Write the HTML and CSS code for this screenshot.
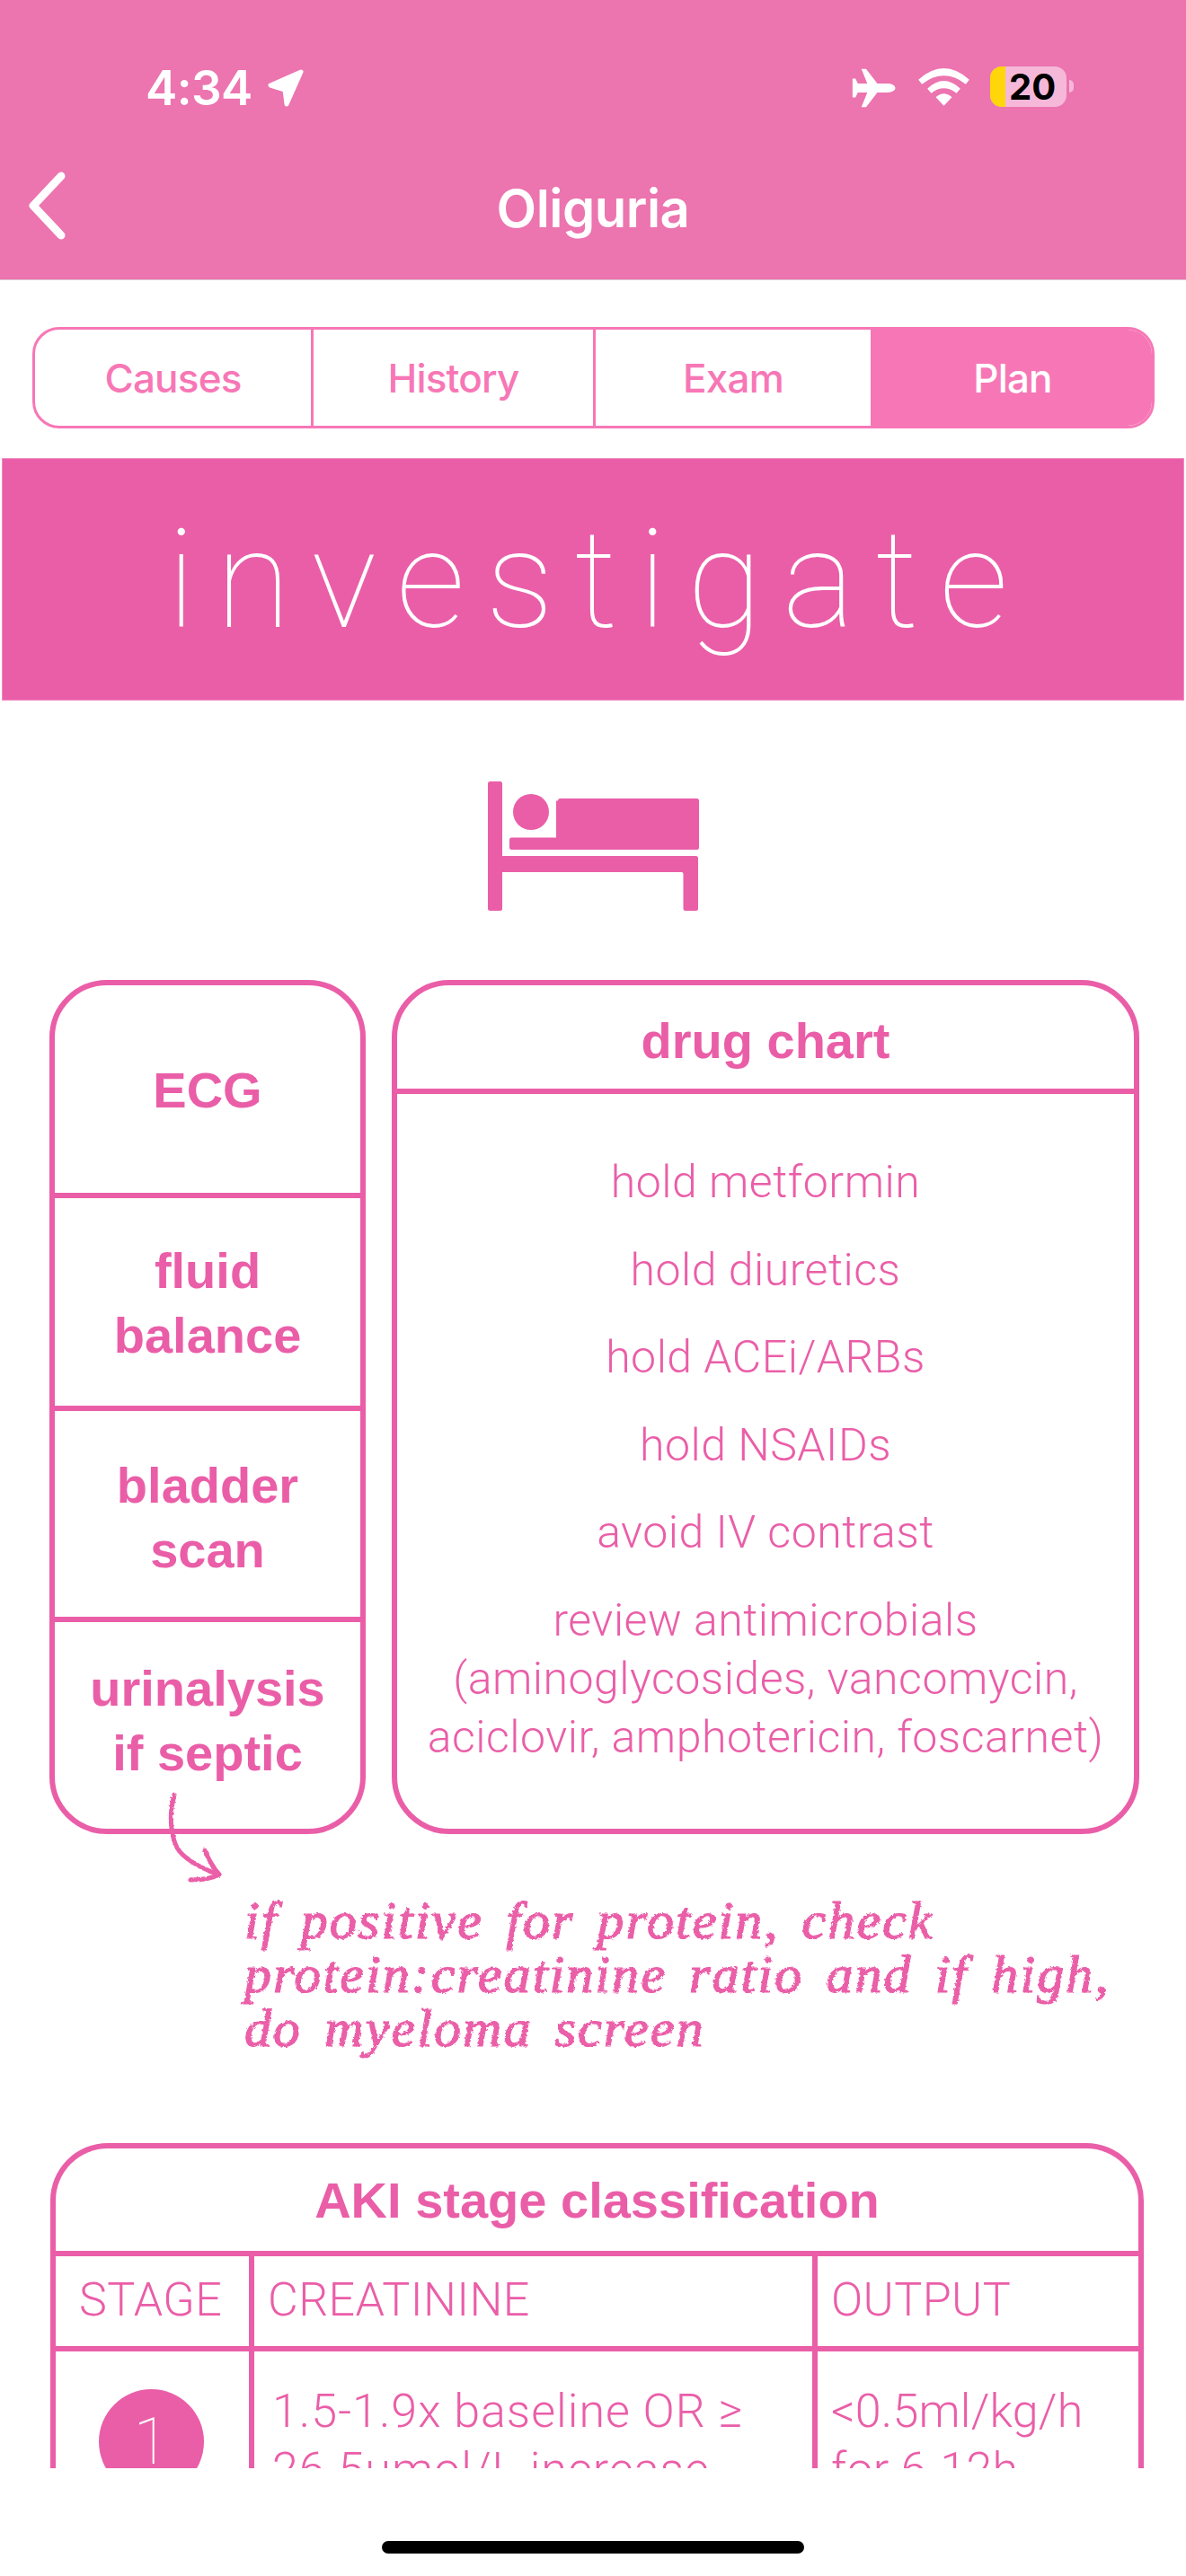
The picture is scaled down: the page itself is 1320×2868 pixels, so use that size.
FILE: index.html
```html
<!DOCTYPE html>
<html lang="en">
<head>
<meta charset="utf-8">
<title>Oliguria</title>
<link rel="stylesheet" href="styles.css">
</head>
<body>
<svg class="defs" width="0" height="0" aria-hidden="true">
  <filter id="rough" x="-5%" y="-5%" width="110%" height="110%">
    <feTurbulence type="fractalNoise" baseFrequency="0.35" numOctaves="2" seed="4" result="n"/>
    <feDisplacementMap in="SourceGraphic" in2="n" scale="3.5"/>
  </filter>
</svg>
<div class="phone">
  <header class="top">
    <div class="status">
      <span class="time">4:34</span>
      <svg class="loc" viewBox="0 0 42 42"><path d="M38 3 L4 18 L20 23 L22 39 Z" fill="#fff" stroke="#fff" stroke-width="5" stroke-linejoin="round"/></svg>
      <div class="status-right">
        <svg class="plane" viewBox="140 78 148 134"><path d="M287 145C287 137 275 130 262 130L226 130L188 80L172 80L192 130L160 130L152 113L142 113L142 177L152 177L160 160L192 160L172 210L188 210L226 160L262 160C275 160 287 153 287 145Z" fill="#fff"/></svg>
        <svg class="wifi" viewBox="360 75 170 126"><path d="M360 113Q445 37 530 113L518 128Q445 72 372 128ZM390 143Q445 91 500 143L487 158Q445 126 403 158ZM418 172Q445 148 472 172L445 200Z" fill="#fff"/></svg>
        <div class="battery"><span class="battery-fill"></span><span class="battery-num">20</span></div>
        <span class="battery-cap"></span>
      </div>
    </div>
    <div class="nav">
      <svg class="back" viewBox="0 0 44 76"><path d="M38 5 L7 38 L38 71" fill="none" stroke="#fff" stroke-width="9" stroke-linecap="round" stroke-linejoin="round"/></svg>
      <h1 class="title">Oliguria</h1>
    </div>
  </header>

  <main class="content">
    <nav class="tabs">
      <span class="tab">Causes</span>
      <span class="tab">History</span>
      <span class="tab">Exam</span>
      <span class="tab tab-on">Plan</span>
    </nav>

    <div class="banner">investigate</div>

    <svg class="bed" viewBox="0 0 236 144">
      <rect x="0" y="0" width="16" height="144" rx="2.5"/>
      <circle cx="48" cy="34" r="20"/>
      <path d="M78 21.5a2.500 2.500 0 0 1 2.500-2.500H232.500a2.500 2.500 0 0 1 2.500 2.500V73.500a2.500 2.500 0 0 1-2.500 2.500H26.500a2.500 2.500 0 0 1-2.500-2.500V65a2.500 2.500 0 0 1 2.500-2.500H76V21.500Z"/>
      <path d="M16 83H231.500a2.500 2.500 0 0 1 2.500 2.500V141.500a2.500 2.500 0 0 1-2.500 2.500H220a2.500 2.500 0 0 1-2.500-2.500V103a2 2 0 0 0-2-2H16Z"/>
    </svg>

    <section class="pair">
      <div class="card stack">
        <div class="stack-row">ECG</div>
        <div class="stack-row">fluid<br>balance</div>
        <div class="stack-row">bladder<br>scan</div>
        <div class="stack-row">urinalysis<br>if septic</div>
      </div>
      <div class="card chart">
        <h2 class="chart-head">drug chart</h2>
        <ul class="chart-list">
          <li>hold metformin</li>
          <li>hold diuretics</li>
          <li>hold ACEi/ARBs</li>
          <li>hold NSAIDs</li>
          <li>avoid IV contrast</li>
          <li>review antimicrobials<br>(aminoglycosides, vancomycin,<br>aciclovir, amphotericin, foscarnet)</li>
        </ul>
      </div>
      <svg class="note-arrow" viewBox="0 0 75 105"><path d="M17 3C10 28 14 50 20 62C28 76 50 86 66 92M51 65C55 75 60 84 67 92C58 97 46 98 35 98" fill="none" stroke="#ea5ea8" stroke-width="5" stroke-linecap="round" stroke-linejoin="round"/></svg>
    </section>

    <p class="note">if positive for protein, check<br>protein:creatinine ratio and if high,<br>do myeloma screen</p>

    <section class="card aki">
      <h2 class="aki-head">AKI stage classification</h2>
      <div class="aki-row aki-labels">
        <div class="aki-cell aki-stage">STAGE</div>
        <div class="aki-cell">CREATININE</div>
        <div class="aki-cell">OUTPUT</div>
      </div>
      <div class="aki-row">
        <div class="aki-cell aki-stage"><span class="stage-dot">1</span></div>
        <div class="aki-cell aki-val">1.5-1.9x baseline OR ≥<br>26.5µmol/L increase</div>
        <div class="aki-cell aki-val aki-out">&lt;0.5ml/kg/h<br>for 6-12h</div>
      </div>
    </section>
  </main>

  <footer class="home"><span class="home-bar"></span></footer>
</div>
</body>
</html>
```
FILE: styles.css
```css
* { box-sizing: border-box; }
html, body { margin: 0; padding: 0; background: #fff; }
.defs { position: absolute; }
.phone { width: 1320px; height: 2868px; display: flex; flex-direction: column; overflow: hidden; color: #ea5ea8; font-family: "Roboto", "Liberation Sans", sans-serif; }

.top { height: 312px; flex: none; background: #ec74af; border-bottom: 1px solid #d9c7d0; color: #fff; }
.status { display: flex; align-items: flex-start; height: 176px; padding: 75px 125px 0 162px; }
.time { font: 600 53px/46px "Inter", sans-serif; letter-spacing: -0.6px; }
.loc { width: 42px; height: 42px; margin: 2px 0 0 16px; }
.status-right { display: flex; align-items: flex-start; margin-left: auto; }
.plane { width: 49px; height: 44px; margin-top: 1px; }
.wifi { width: 57px; height: 42px; margin: 1px 0 0 25px; }
.battery { position: relative; width: 85px; height: 45px; margin: -1px 0 0 23px; border-radius: 13px; background: #f6b8d8; overflow: hidden; }
.battery-fill { display: block; width: 17px; height: 100%; background: #ffd60a; }
.battery-num { position: absolute; left: 21px; top: 0; font: 700 40px/45px "Inter", sans-serif; color: #000; }
.battery-cap { width: 5px; height: 14px; margin: 14px 0 0 3px; background: #f6b8d8; border-radius: 0 7px 7px 0; }

.nav { display: grid; grid-template-columns: 1fr auto 1fr; align-items: center; height: 135px; padding-bottom: 24px; }
.back { width: 44px; height: 76px; margin: -6px 0 0 30px; }
.title { margin: 0; font: 600 58px/64px "Inter", sans-serif; letter-spacing: -0.5px; }

.content { flex: 1; min-height: 0; overflow: hidden; padding-top: 52px; }

.tabs { display: grid; grid-template-columns: 310px 314px 309px 1fr; width: 1249px; height: 113px; margin-left: 36px; border: 3px solid #f777b6; border-radius: 30px; overflow: hidden; }
.tab { display: flex; align-items: center; justify-content: center; color: #f777b6; font: 500 44px/1 "Inter", sans-serif; letter-spacing: -0.8px; border-right: 3px solid #f777b6; }
.tab-on { background: #f777b6; color: #fff; border-right: 0; }

.banner { height: 270px; margin: 33px 2px 0; padding: 4px 0 0 11px; background: #ea5ea8; border: 1px solid #f08cc0; color: #fff; text-align: center; font: 100 152px/262px "Roboto", sans-serif; letter-spacing: 23px; }

.bed { display: block; width: 236px; height: 144px; margin: 90px 0 0 543px; fill: #ea5ea8; }

.pair { position: relative; display: grid; grid-template-columns: 352px 832px; gap: 29px; height: 951px; margin: 77px 0 0 55px; }
.card { border: 6px solid #ea5ea8; border-radius: 64px; }
.stack { display: grid; grid-template-rows: 237px 237px 235px 1fr; }
.stack-row { display: flex; align-items: center; justify-content: center; text-align: center; border-bottom: 6px solid #ea5ea8; font: 700 56px/72px "Liberation Sans", sans-serif; padding-top: 3px; }
.stack-row:nth-child(3) { padding-top: 8px; }
.stack-row:last-child { border-bottom: 0; padding: 0 0 10px; }
.chart { display: flex; flex-direction: column; }
.chart-head { margin: 0; height: 121px; border-bottom: 6px solid #ea5ea8; text-align: center; font: 700 56px/124px "Liberation Sans", sans-serif; }
.chart-list { margin: 0; padding: 66px 0 0; list-style: none; text-align: center; font: 300 50px/65px "Roboto", sans-serif; letter-spacing: 0.5px; }
.chart-list li { margin-bottom: 32.5px; }
.note-arrow { position: absolute; left: 122px; top: 904px; width: 75px; height: 105px; filter: url(#rough); }

.note { margin: 66px 0 0 272px; font: italic 400 60px/60px "Liberation Serif", serif; letter-spacing: 2.1px; word-spacing: 8px; white-space: nowrap; -webkit-text-stroke: 1.2px #ea5ea8; filter: url(#rough); }

.aki { width: 1217px; height: 480px; margin: 98px 0 0 56px; border-bottom: 0; border-radius: 64px 64px 0 0; }
.aki-head { margin: 0; height: 114px; text-align: center; font: 700 56px/116px "Liberation Sans", sans-serif; }
.aki-row { display: grid; grid-template-columns: 215px 627px 1fr; border-top: 6px solid #ea5ea8; font: 300 52px/65px "Roboto", sans-serif; letter-spacing: 0.4px; }
.aki-labels { height: 106px; }
.aki-cell { padding: 16px 0 0 15px; border-left: 6px solid #ea5ea8; }
.aki-stage { border-left: 0; padding-left: 26px; }
.aki-val { padding: 34px 4px 0 20px; letter-spacing: 1px; }
.aki-out { padding-left: 15px; letter-spacing: 0.2px; }
.stage-dot { display: flex; align-items: center; justify-content: center; width: 117px; height: 117px; margin: 42px 0 0 48px; border-radius: 50%; background: #ea5ea8; color: #fff; font: 100 72px/1 "Roboto", sans-serif; }
.aki-stage:has(.stage-dot) { padding: 0; }

.home { flex: none; height: 120px; padding-top: 81px; }
.home-bar { display: block; width: 470px; height: 14px; margin-left: 425px; border-radius: 7px; background: #000; }
```
